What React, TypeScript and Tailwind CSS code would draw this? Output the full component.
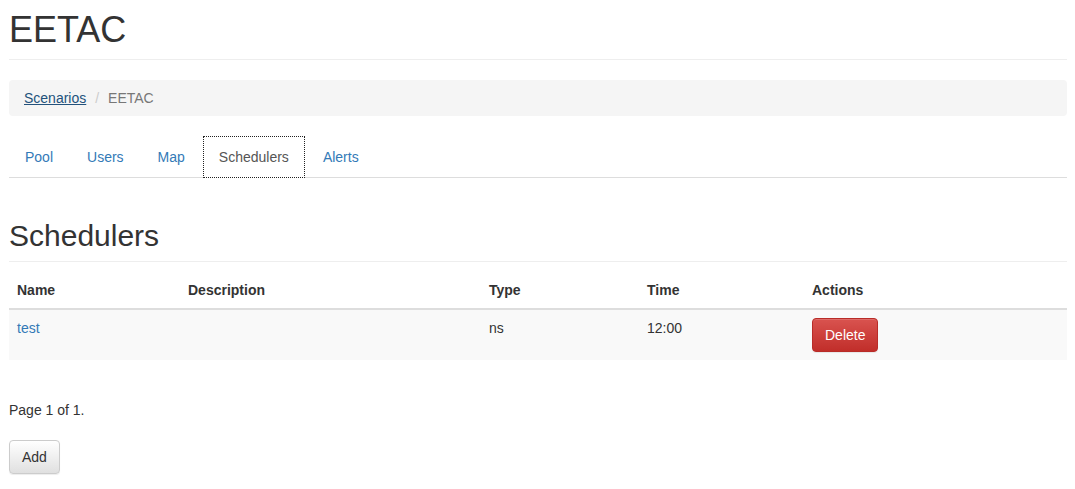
import React from 'react';

const tabs = ['Pool', 'Users', 'Map', 'Schedulers', 'Alerts'];

const App: React.FC = () => {
  return (
    <div className="min-h-screen bg-white pl-[9px] pr-[8px] text-[14px] leading-[20px] text-[#333] font-['Liberation_Sans',Arial,sans-serif]">
      {/* page header */}
      <div className="border-b border-[#eee] pt-[10px] pb-[9px]">
        <h1 className="text-[36px] leading-[39.6px] font-normal">EETAC</h1>
      </div>

      {/* breadcrumb */}
      <ol className="mt-[20px] flex h-[36px] items-center rounded-[4px] bg-[#f5f5f5] px-[15px]">
        <li>
          <a href="#" className="text-[#23527c] underline">Scenarios</a>
        </li>
        <li className="ml-[4px] px-[5px] text-[#ccc]">/{'\u00a0'}</li>
        <li className="text-[#777]">EETAC</li>
      </ol>

      {/* tabs */}
      <ul className="mt-[20px] flex border-b border-[#ddd]">
        {tabs.map(t =>
          t === 'Schedulers' ? (
            <li key={t} className="-mb-px mr-[2px]">
              <a href="#" className="block border border-dotted border-[#212121] bg-white px-[15px] py-[10px] text-[#555]">
                {t}
              </a>
            </li>
          ) : (
            <li key={t} className="-mb-px mr-[2px]">
              <a href="#" className="block border border-transparent px-[15px] py-[10px] text-[#337ab7]">
                {t}
              </a>
            </li>
          )
        )}
      </ul>

      {/* section header */}
      <div className="mt-[41px] border-b border-[#eee] pb-[9px]">
        <h2 className="text-[30px] leading-[33px] font-normal">Schedulers</h2>
      </div>

      <table className="mt-[10px] w-full border-collapse text-left">
        <thead>
          <tr className="border-b-2 border-[#ddd]">
            <th className="w-[171px] p-[8px] font-bold">Name</th>
            <th className="w-[301px] p-[8px] font-bold">Description</th>
            <th className="w-[158px] p-[8px] font-bold">Type</th>
            <th className="w-[165px] p-[8px] font-bold">Time</th>
            <th className="p-[8px] font-bold">Actions</th>
          </tr>
        </thead>
        <tbody>
          <tr className="bg-[#f9f9f9] align-top">
            <td className="p-[8px]">
              <a href="#" className="text-[#337ab7]">test</a>
            </td>
            <td className="p-[8px]"></td>
            <td className="p-[8px]">ns</td>
            <td className="p-[8px]">12:00</td>
            <td className="p-[8px]">
              <button className="h-[34px] rounded-[4px] border border-[#b92c28] bg-[linear-gradient(to_bottom,#d9534f_0,#c12e2a_100%)] px-[12px] text-white shadow-[inset_0_1px_0_rgba(255,255,255,0.15),0_1px_1px_rgba(0,0,0,0.075)]">
                Delete
              </button>
            </td>
          </tr>
        </tbody>
      </table>

      <p className="mt-[40px]">Page 1 of 1.</p>

      <button className="mt-[20px] h-[34px] rounded-[4px] border border-[#ccc] bg-[linear-gradient(to_bottom,#fff_0,#e0e0e0_100%)] px-[12px] text-[#333] shadow-[inset_0_1px_0_rgba(255,255,255,0.15),0_1px_1px_rgba(0,0,0,0.075)]">
        Add
      </button>
    </div>
  );
};

export default App;
